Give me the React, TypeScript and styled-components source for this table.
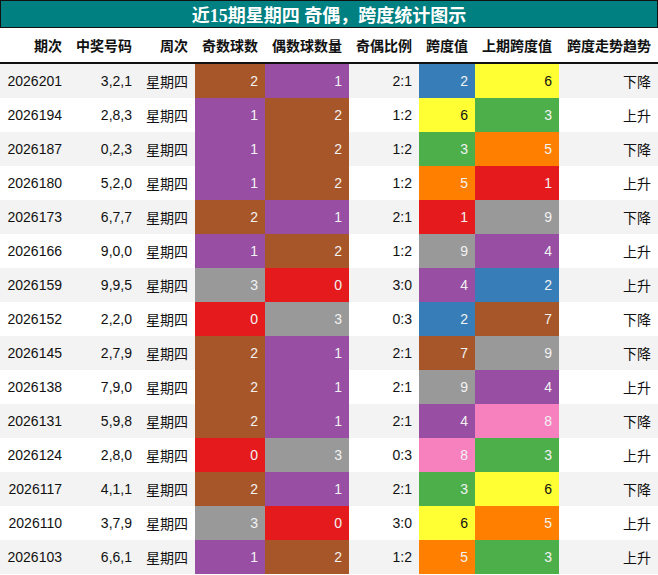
import styled, { createGlobalStyle } from "styled-components";

const GlobalStyle = createGlobalStyle`
  html, body {
    margin: 0;
    padding: 0;
    background: #ffffff;
  }
  body {
    font-family: "Liberation Sans", "Noto Sans CJK SC", sans-serif;
  }
`;

const COLUMNS = "69px 70px 56px 70px 84px 70px 56px 84px 99px";

// Set1-ish palette keyed by value
const SPAN_COLORS: Record<number, string> = {
  1: "#e41a1c",
  2: "#377eb8",
  3: "#4daf4a",
  4: "#984ea3",
  5: "#ff7f00",
  6: "#ffff33",
  7: "#a65628",
  8: "#f781bf",
  9: "#999999",
};

const COUNT_COLORS: Record<number, string> = {
  0: "#e41a1c",
  1: "#984ea3",
  2: "#a65628",
  3: "#999999",
};

const Page = styled.div`
  width: 658px;
  height: 575px;
  overflow: hidden;
`;

const TitleBar = styled.div`
  height: 28px;
  box-sizing: border-box;
  border: 1px solid #111;
  background: #008080;
  color: #fff;
  display: flex;
  align-items: center;
  justify-content: center;
  font-family: "Liberation Serif", "Noto Sans CJK SC", serif;
  font-weight: bold;
  font-size: 18px;
`;

const HeaderRow = styled.div`
  display: grid;
  grid-template-columns: ${COLUMNS};
  height: 36px;
  box-sizing: border-box;
  border-bottom: 2px solid #111;
`;

const HeadCell = styled.div`
  display: flex;
  align-items: center;
  justify-content: flex-end;
  padding-right: 7px;
  font-size: 14px;
  font-weight: bold;
  color: #111;
`;

const Row = styled.div<{ $odd: boolean }>`
  display: grid;
  grid-template-columns: ${COLUMNS};
  height: 34px;
  background: ${(p) => (p.$odd ? "#f3f3f3" : "#ffffff")};
`;

const Cell = styled.div<{ $bg?: string; $dark?: boolean }>`
  display: flex;
  align-items: center;
  justify-content: flex-end;
  padding-right: 7px;
  font-size: 14px;
  background: ${(p) => p.$bg || "transparent"};
  color: ${(p) => (p.$bg ? (p.$dark ? "#111" : "#f2f2f2") : "#111")};
`;

type Draw = [string, string, number, number, number, number, string];

const DATA: Draw[] = [
  ["2026201", "3,2,1", 2, 1, 2, 6, "下降"],
  ["2026194", "2,8,3", 1, 2, 6, 3, "上升"],
  ["2026187", "0,2,3", 1, 2, 3, 5, "下降"],
  ["2026180", "5,2,0", 1, 2, 5, 1, "上升"],
  ["2026173", "6,7,7", 2, 1, 1, 9, "下降"],
  ["2026166", "9,0,0", 1, 2, 9, 4, "上升"],
  ["2026159", "9,9,5", 3, 0, 4, 2, "上升"],
  ["2026152", "2,2,0", 0, 3, 2, 7, "下降"],
  ["2026145", "2,7,9", 2, 1, 7, 9, "下降"],
  ["2026138", "7,9,0", 2, 1, 9, 4, "上升"],
  ["2026131", "5,9,8", 2, 1, 4, 8, "下降"],
  ["2026124", "2,8,0", 0, 3, 8, 3, "上升"],
  ["2026117", "4,1,1", 2, 1, 3, 6, "下降"],
  ["2026110", "3,7,9", 3, 0, 6, 5, "上升"],
  ["2026103", "6,6,1", 1, 2, 5, 3, "上升"],
];

const HEADERS = ["期次", "中奖号码", "周次", "奇数球数", "偶数球数量", "奇偶比例", "跨度值", "上期跨度值", "跨度走势趋势"];

export default function App() {
  return (
    <Page>
      <GlobalStyle />
      <TitleBar>近15期星期四 奇偶，跨度统计图示</TitleBar>
      <HeaderRow>
        {HEADERS.map((h) => (
          <HeadCell key={h}>{h}</HeadCell>
        ))}
      </HeaderRow>
      {DATA.map(([issue, nums, odd, even, span, prev, trend], i) => (
        <Row key={issue} $odd={i % 2 === 0}>
          <Cell>{issue}</Cell>
          <Cell>{nums}</Cell>
          <Cell>星期四</Cell>
          <Cell $bg={COUNT_COLORS[odd]}>{odd}</Cell>
          <Cell $bg={COUNT_COLORS[even]}>{even}</Cell>
          <Cell>{`${odd}:${even}`}</Cell>
          <Cell $bg={SPAN_COLORS[span]} $dark={span === 6}>{span}</Cell>
          <Cell $bg={SPAN_COLORS[prev]} $dark={prev === 6}>{prev}</Cell>
          <Cell>{trend}</Cell>
        </Row>
      ))}
    </Page>
  );
}
